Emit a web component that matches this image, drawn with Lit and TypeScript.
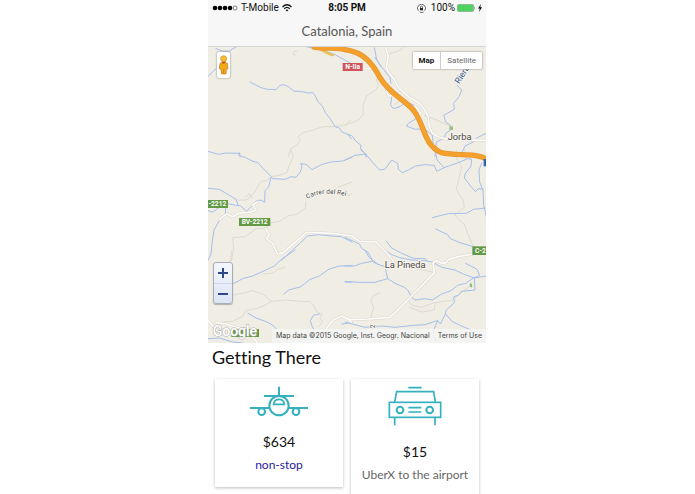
import { LitElement, html, css, svg } from "lit";
import { customElement } from "lit/decorators.js";

/* Map artwork is drawn in tiles, three units to a pixel. */
interface Tile {
  x: number;
  y: number;
  streams?: string[];
  tracks?: string[];
  roads?: string[];
}

const tiles: Tile[] = [
  {
    x: -6, y: -3,
    streams: [
      "M132 108L165 125L185 130L210 131L220 120Q230 112 247 122L263 135L290 137L305 141L320 140L328 150L335 165L350 182L358 200L372 218L388 242L400 246L408 258L425 265L437 279",
      "M30 8L50 15L68 16L90 3",
      "M6 91L30 68",
      "M303 3L345 10L385 25L435 52",
      "M6 316L20 320L38 325L60 321L97 322L101 331",
    ],
    tracks: [
      "M435 222L418 236L388 242L350 242L322 252L290 260L276 272L284 284L272 298L254 308L248 331",
      "M273 15Q262 14 261 22Q262 28 268 27",
    ],
  },
  {
    x: 411, y: -3,
    streams: [
      "M8 265L22 270L30 283L48 298L46 306L60 324L64 333",
      "M90 35L108 60L135 95L138 112",
      "M88 5L95 40L108 62",
      "M140 152L137 178L145 188L165 182L180 170L195 172L210 180L215 200L218 215L190 232L184 240L210 250L238 248L262 268L264 290L272 320",
      "M336 118L350 132L342 152L326 172L328 190L296 208L302 228L318 240L317 252L302 262L298 276L274 288L270 331",
      "M423 262L395 276L385 288L360 300L350 322",
    ],
    tracks: [
      "M0 238L40 222L55 205L54 180L64 150L92 132L100 118L94 98",
      "M125 25L160 15L175 5",
      "M150 175L165 165L150 150",
      "M238 208L270 220L315 240",
    ],
    roads: [
      "M121 3L130 30L124 62L130 78L146 98L158 122L190 152L222 170L238 190L250 212L252 240L262 262L282 274L310 280L423 283",
      "M0 68L80 67L100 80L118 110L130 150L150 148L165 140",
      "M210 180L226 200L222 226L236 240",
    ],
  },
  {
    x: -6, y: 309,
    streams: [
      "M100 8L103 19L118 22L138 33L155 38L172 56L195 79L200 86L238 88L255 80L270 82L283 66L288 50L284 41L300 43L318 59L346 44L374 36L410 33L438 22",
      "M195 82L188 110L177 122L176 157L165 150L150 153L135 170L122 184L104 168L90 166L60 160L40 172L20 186L6 182",
      "M6 115L40 118L62 131L90 148L96 164",
      "M60 164L58 190L40 212L24 240L18 280L15 312L6 331",
      "M226 331L262 298L282 280L304 258L338 254L376 258L406 260L438 276",
    ],
    tracks: [
      "M255 0L262 20L250 45L243 68L220 76L200 79L180 92L165 94L150 120L135 140L120 150L95 150",
      "M438 96L395 112",
      "M300 155L298 175L275 192L245 198L225 212L193 220L178 235L150 236L118 260L80 263L83 300L76 331",
      "M118 140L130 132L140 145",
    ],
    roads: [
      "M40 208L62 192L80 200L98 190L135 186L150 180L140 165L156 155",
      "M178 235L190 254L182 266L200 280L214 312L232 308L262 282L290 258L300 247L380 250L438 258L460 274L510 276L545 312L562 334",
    ],
  },
  {
    x: 411, y: 309,
    streams: [
      "M0 30L30 16L62 12L84 38L104 60L120 58L140 30L158 40L160 58L172 68L190 60L212 48L238 44L268 46L275 64L300 52L340 38L368 26L380 28L378 48L360 72L358 84L380 112L392 125L400 116L415 118",
      "M48 0L66 16",
      "M270 0L276 30L296 52",
      "M410 40L402 60L404 96L414 122L416 165L424 200",
      "M262 203L310 191L364 190L386 178L420 174",
      "M272 237L308 254L316 266L345 278L385 290",
      "M124 273L140 294L170 310L205 325L240 326L246 331",
      "M0 262L44 283L50 295L70 308L82 331",
    ],
    tracks: [
      "M335 0L330 18L350 50L342 85L334 118L354 150L358 172L330 194L338 206L358 222L368 250L380 280L390 292",
      "M360 0L362 30",
      "M0 120L12 138L20 130",
    ],
  },
  {
    x: -6, y: 609,
    streams: [
      "M80 102L112 85L140 78L188 56L205 48L230 25L268 0",
      "M234 132L248 120L285 110L312 88L340 78L370 57L400 48L438 47",
      "M417 96L438 97",
      "M126 190L150 204L175 213L195 222L212 237",
      "M340 192L322 196L313 212L318 228L324 240",
      "M6 266L40 264L80 276L110 279",
      "M408 222L438 218",
    ],
    tracks: [
      "M80 135L118 128L138 122L170 132L197 154L240 150L280 154L312 155L325 168L330 184L348 192L342 205L350 216L338 230",
      "M197 154L172 168L150 176L120 182L108 200L80 214L50 216",
      "M170 72L200 70L215 58L236 52",
      "M78 0L72 40",
    ],
    roads: ["M6 212L32 240L48 252", "M30 218L60 222L90 232L122 238L140 262L158 282", "M358 240L382 210L408 198L424 206L436 216"],
  },
  {
    x: 411, y: 609,
    streams: [
      "M0 48L28 48L50 40L82 34L96 42L120 50L128 86L150 100L178 112L190 122L198 140L210 150L240 146L262 150L290 132L318 122L338 106L362 100L388 82",
      "M60 0L72 22L98 42",
      "M128 86L90 97L40 97L0 94",
      "M118 0L140 14L168 24L200 30L240 32L262 36L290 52L330 60L355 72L388 84L423 78",
      "M362 40L396 58L404 76L388 84L390 120L350 124L340 136L326 140L328 158L304 180L300 194L286 222L278 212L270 214L240 224L205 226L150 232L110 228L60 232L0 216",
      "M302 192L322 215L350 228L378 240",
      "M278 212L264 245L272 272",
    ],
    tracks: [
      "M104 128L84 138L78 152L86 175L78 196L82 212",
      "M190 152L200 165L230 172L262 160L295 154L322 152L345 130L380 105",
      "M194 172L230 186L268 180L270 164",
      "M180 50L225 58L262 66",
    ],
    roads: [
      "M-4 200L14 209L70 207L134 202L160 178L200 138L268 68L264 40L272 32L290 40L304 38L310 28L340 20L385 12",
    ],
  },
];

const draw = (kind: "streams" | "tracks" | "roads", name: string) =>
  tiles.map(
    (t) => svg`<g class=${name} transform="translate(${t.x} ${t.y})">
      ${(t[kind] ?? []).map((d) => svg`<path d=${d} />`)}
    </g>`
  );

@customElement("area-map")
export class AreaMap extends LitElement {
  static styles = css`
    :host {
      display: block;
      position: relative;
      aspect-ratio: 278 / 296;
      overflow: hidden;
      background: #f0ede5;
      font-family: Roboto, "Liberation Sans", sans-serif;
    }
    .canvas { display: block; width: 100%; height: 100%; }
    .canvas path { fill: none; stroke-linejoin: round; stroke-linecap: round; }
    .stream path { stroke: #a6bfea; stroke-width: 3; }
    .track path { stroke: #dedad1; stroke-width: 3; }
    .casing path { stroke: #d9d5cc; stroke-width: 8; }
    .road path { stroke: #fdfcf9; stroke-width: 5; }
    .canvas .highway-edge { stroke: #e3952a; stroke-width: 16; }
    .canvas .highway { stroke: #f5a02c; stroke-width: 12; }
    .canvas .spur { stroke: #e8c35c; stroke-width: 8; }
    .town { font-size: 28px; fill: #4e483f; stroke: #f7f5f0; stroke-width: 6; paint-order: stroke; }
    .street { font-size: 20px; fill: #4c4c4c; stroke: #f7f5f0; stroke-width: 5; paint-order: stroke; }
    .river { font-size: 26px; fill: #46628c; stroke: #f7f5f0; stroke-width: 4; paint-order: stroke; }
    .shield { font-size: 20px; font-weight: 700; fill: #fff; text-anchor: middle; }
    .brand { font-size: 42px; font-weight: 500; fill: #fff; stroke: #aaa; stroke-width: 3; paint-order: stroke; }
    button {
      margin: 0;
      padding: 0;
      border: 0;
      background: none;
      font: inherit;
      color: inherit;
      cursor: pointer;
    }
    .pegman {
      position: absolute;
      left: 9px;
      top: 5px;
      width: 13px;
      height: 26px;
      border-radius: 2px;
      background: #fff;
      box-shadow: 0 0 2px #0008;
      display: grid;
      place-items: center;
    }
    .types {
      position: absolute;
      right: 4px;
      top: 5px;
      display: flex;
      height: 17px;
      background: #fff;
      box-shadow: 0 0 2px #0008;
      border-radius: 1px;
      font-size: 8px;
      color: #666;
    }
    .types button { padding: 0 6px; }
    .types button + button { border-left: 1px solid #ccc; }
    .types .on { font-weight: 700; color: #111; }
    .zoom {
      position: absolute;
      left: 5px;
      bottom: 39px;
      width: 20px;
      height: 42px;
      box-sizing: border-box;
      display: grid;
      grid-template-rows: 1fr 1fr;
      border: 1px solid #a9acb5;
      border-radius: 3px;
      background: linear-gradient(#f4f7fd, #dce4f5);
      box-shadow: 0 1px 1px #0004;
    }
    .zoom button { display: grid; place-items: center; }
    .zoom button + button { border-top: 1px solid #cdd5e6; }
    .legal {
      position: absolute;
      right: 0;
      bottom: 0;
      display: flex;
      gap: 8px;
      padding: 0 4px;
      background: #f5f5f5cc;
      font-family: Inter, sans-serif;
      font-size: 7px;
      line-height: 14px;
      color: #444;
      white-space: nowrap;
    }
    .legal a { color: inherit; text-decoration: none; }
  `;

  render() {
    const highway = "M318 0C360 6 385 1 411 8C470 16 495 52 516 92C545 142 590 157 618 192C652 237 645 292 700 317C750 329 800 315 840 338";
    return html`
      <svg class="canvas" viewBox="0 0 834 888" preserveAspectRatio="xMidYMid slice" role="img" aria-label="Map of Jorba and La Pineda">
        ${draw("tracks", "track")} ${draw("streams", "stream")}
        ${draw("roads", "casing")} ${draw("roads", "road")}
        <path class="spur" d="M330 4L362 20L374 24" />
        <path class="highway-edge" d=${highway} />
        <path class="highway" d=${highway} />
        <rect x="724" y="238" width="11" height="11" fill="#9fc08d" />
        <path d="M788 712L790 718" stroke="#86b973" stroke-width="6" />

        <rect x="404" y="48" width="60" height="24" fill="#d0535c" />
        <text class="shield" x="434" y="67">N-IIa</text>
        <rect x="-4" y="459" width="64" height="24" fill="#639a45" />
        <text class="shield" x="28" y="478">-2212</text>
        <rect x="93" y="513" width="94" height="24" fill="#639a45" />
        <text class="shield" x="140" y="532">BV-2212</text>
        <rect x="793" y="598" width="60" height="26" fill="#639a45" />
        <text class="shield" x="817" y="618">C-2</text>
        <rect x="70" y="846" width="83" height="24" fill="#639a45" />
        <rect x="827" y="336" width="10" height="22" fill="#2f62b0" />

        <text class="town" x="719" y="279">Jorba</text>
        <text class="town" x="530" y="662">La Pineda</text>
        <path id="carrer" d="M298 456Q350 424 440 456" />
        <text class="street"><textPath href="#carrer">Carrer del Rei</textPath></text>
        <text class="river" transform="translate(754 112) rotate(-58)">Riera</text>
        <text class="street" transform="translate(501 844) rotate(-90)">2</text>
        <text class="brand" x="14" y="868">Google</text>
      </svg>

      <button class="pegman" aria-label="Street View">
        <svg width="11" height="20" viewBox="0 0 33 60">
          <path d="M6 25Q16 18 28 25L30 41L25 44L24 57H11L9 44L4 41Z" fill="#f0a81d" stroke="#c17c12" stroke-width="2" />
          <circle cx="17" cy="11" r="9" fill="#f7bd35" stroke="#c98915" stroke-width="2" />
          <path d="M10 20H24L17 27Z" fill="#b74b16" />
          <path d="M17 42V56" stroke="#c17c12" stroke-width="2" />
        </svg>
      </button>
      <div class="types">
        <button class="on">Map</button><button>Satellite</button>
      </div>
      <div class="zoom">
        <button aria-label="Zoom in">
          <svg width="10" height="10" viewBox="0 0 10 10"><path d="M0 5H10M5 0V10" stroke="#2c4688" stroke-width="2" /></svg>
        </button>
        <button aria-label="Zoom out">
          <svg width="10" height="10" viewBox="0 0 10 10"><path d="M0 5H10" stroke="#2c4688" stroke-width="2" /></svg>
        </button>
      </div>
      <div class="legal">
        <span>Map data ©2015 Google, Inst. Geogr. Nacional</span>
        <a href="#terms">Terms of Use</a>
      </div>
    `;
  }
}

@customElement("app-root")
export class AppRoot extends LitElement {
  static styles = css`
    :host {
      display: block;
      box-sizing: border-box;
      height: 100vh;
      overflow: hidden;
      padding: 0 209px 0 208px;
      background: #fff;
      color: #111;
      font-family: Lato, "Open Sans", sans-serif;
      font-variant-ligatures: none;
    }
    header { background: #f7f7f7; border-bottom: 1px solid #d4d4d4; }
    .status {
      display: grid;
      grid-template-columns: 1fr auto 1fr;
      align-items: center;
      height: 16px;
      padding: 0 4px;
      font: 10px/16px Roboto, sans-serif;
    }
    .left, .right { display: flex; align-items: center; }
    .left { gap: 3px; }
    .right { justify-content: flex-end; gap: 2px; }
    .lock { margin-right: 3px; }
    .time { font-weight: 700; }
    h1 {
      margin: 0;
      font-size: 13px;
      line-height: 30px;
      font-weight: 400;
      text-align: center;
      color: #555;
    }
    h2 {
      margin: 0 4px 8px;
      font-size: 18px;
      line-height: 28px;
      font-weight: 400;
    }
    .cards {
      display: grid;
      grid-template-columns: 1fr 1fr;
      align-items: start;
      gap: 8px;
      padding: 0 7px;
    }
    .card {
      display: flex;
      flex-direction: column;
      align-items: center;
      padding: 7px 0 12px;
      background: #fff;
      box-shadow: 0 1px 3px #0004;
    }
    .card svg { fill: none; stroke: #35b0bf; stroke-width: 6; }
    .price { margin: 15px 0 3px; font-size: 14px; line-height: 20px; }
    .note { font-size: 12px; line-height: 20px; color: #666; }
    a.note { color: #2a1a9c; text-decoration: none; }
  `;

  render() {
    return html`
      <header>
        <div class="status">
          <div class="left">
            <svg width="26" height="6" viewBox="0 0 26 6">
              <circle cx="3" cy="3" r="2.3" /><circle cx="8" cy="3" r="2.3" />
              <circle cx="13" cy="3" r="2.3" /><circle cx="18" cy="3" r="2.3" />
              <circle cx="23" cy="3" r="2" fill="none" stroke="#333" stroke-width=".6" />
            </svg>
            <span>T-Mobile</span>
            <svg width="10" height="8" viewBox="0 0 20 16" fill="none" stroke="#111" stroke-width="2.6">
              <path d="M1 6Q10 -3 19 6M4.500 9.500Q10 4 15.500 9.500" />
              <path d="M7 12Q10 9.500 13 12L10 15Z" fill="#111" stroke="none" />
            </svg>
          </div>
          <span class="time">8:05 PM</span>
          <div class="right">
            <svg class="lock" width="9" height="9" viewBox="0 0 27 27" fill="none" stroke="#222" stroke-width="2">
              <path d="M4 20A12 12 0 1 1 23 20M8 24A12 12 0 0 0 20 24" />
              <rect x="9" y="12" width="9" height="7" fill="#222" stroke="none" />
              <path d="M10.500 12V9.500A3 3 0 0 1 16.500 9.500V12" />
            </svg>
            <span>100%</span>
            <svg width="19" height="8" viewBox="0 0 19 8">
              <rect x=".5" y=".5" width="16" height="7" rx="1" fill="#4fd35f" stroke="#8aa58d" stroke-width=".7" />
              <path d="M17.500 2.500Q19 4 17.500 5.500Z" fill="#555" />
            </svg>
            <svg width="4" height="8" viewBox="0 0 4 8"><path d="M3 0L0 4.500H1.800L1 8L4 3.300H2.200Z" /></svg>
          </div>
        </div>
        <h1>Catalonia, Spain</h1>
      </header>
      <area-map></area-map>
      <section>
        <h2>Getting There</h2>
        <div class="cards">
          <article class="card">
            <svg width="60" height="31" viewBox="130 138 180 93" aria-hidden="true">
              <path d="M220 140V168M175 168H265M133 204H190M250 204H307" />
              <circle cx="220" cy="197" r="29" />
              <path d="M204 193C206 173 234 173 236 193Z" stroke-width="5" />
              <circle cx="168" cy="215" r="10" /><circle cx="271" cy="215" r="10" />
            </svg>
            <div class="price">$634</div>
            <a class="note" href="#flights">non-stop</a>
          </article>
          <article class="card">
            <svg width="54" height="41" viewBox="129 138 162 123" aria-hidden="true">
              <path d="M190 143H230M149 186L155 155H266L271 186M190 203H229M190 216H229M149 232V256M270 232V256" stroke-width="5" />
              <rect x="133" y="187" width="154" height="45" stroke-width="5" />
              <circle cx="165" cy="210" r="10" /><circle cx="254" cy="210" r="10" />
            </svg>
            <div class="price">$15</div>
            <div class="note">UberX to the airport</div>
          </article>
        </div>
      </section>
    `;
  }
}
